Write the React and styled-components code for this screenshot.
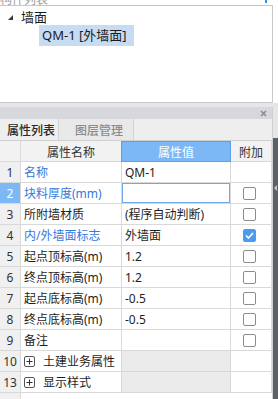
import React from "react";
import styled, { createGlobalStyle } from "styled-components";

const Global = createGlobalStyle`
  html, body { margin: 0; padding: 0; background: #e6e6e6; }
  body { font-family: "Noto Sans", "Noto Sans CJK SC", sans-serif; }
  * { box-sizing: border-box; }
`;

const Root = styled.div`
  width: 278px;
  height: 399px;
  overflow: hidden;
  display: flex;
  flex-direction: column;
  background: #e6e6e6;
`;

const TopArea = styled.div`
  background: #ffffff;
  width: 278px;
`;

const TitleStub = styled.div`
  height: 5px;
  overflow: hidden;
  display: flex;
  justify-content: space-between;
  align-items: flex-end;
  padding-right: 11px;
`;

const StubText = styled.span`
  font-family: "Noto Sans CJK SC", sans-serif;
  font-size: 12px;
  line-height: 12px;
  height: 12px;
  color: #a0a0a0;
  flex: none;
`;

const StubMark = styled.span`
  width: 2px;
  height: 3px;
  background: #3d8fe0;
  align-self: flex-start;
`;

const TreeBox = styled.div`
  width: 273px;
  height: 98px;
  border-top: 1px solid #c8c8c8;
  border-right: 1px solid #c8c8c8;
  border-bottom: 1px solid #c8c8c8;
  background: #ffffff;
  padding-top: 4px;
  display: flex;
  flex-direction: column;
`;

const TreeRow = styled.div`
  display: flex;
  align-items: center;
  height: ${(p) => p.$h}px;
  padding-left: ${(p) => p.$indent}px;
`;

const Caret = styled.svg`
  width: 5px;
  height: 5px;
  margin-right: 8px;
  flex: none;
`;

const TreeLabel = styled.span`
  font-family: "Noto Sans", "Noto Sans CJK SC", sans-serif;
  font-size: 13px;
  color: #1a1a1a;
  padding: ${(p) => (p.$selected ? "0 7px 0 3px" : "0")};
  background: ${(p) => (p.$selected ? "#c7dbf3" : "transparent")};
  height: ${(p) => (p.$selected ? "21px" : "auto")};
  line-height: 21px;
  white-space: nowrap;
`;

const Gap = styled.div`
  height: 4px;
  background: #e6e6e6;
`;

const Lower = styled.div`
  display: flex;
  flex: 1;
  min-height: 0;
`;

const PropPanel = styled.div`
  width: 273px;
  display: flex;
  flex-direction: column;
  background: #eeeeee;
  border-right: 1px solid #cfcfcf;
`;

const TitleBar = styled.div`
  height: 12px;
  background: #d7d8dd;
  display: flex;
  justify-content: flex-end;
  align-items: center;
  padding-right: 5px;
`;

const CloseIcon = styled.svg`
  width: 7px;
  height: 7px;
`;

const TabBar = styled.div`
  height: 22px;
  display: flex;
  background: #eeeeee;
  border-bottom: 1px solid #d0d0d0;
`;

const Tab = styled.div`
  height: 21px;
  display: flex;
  align-items: center;
  font-family: "Noto Sans CJK SC", sans-serif;
  font-size: 12px;
  font-weight: 500;
  color: ${(p) => (p.$active ? "#2a2a2a" : "#8c8c8c")};
  background: ${(p) => (p.$active ? "#eeeeee" : "#e9e9e9")};
  padding: ${(p) => (p.$active ? "0 3px 0 7px" : "0 10px 0 16px")};
  border-right: 1px solid #d3d3d3;
`;

const Side = styled.div`
  flex: 1;
  display: flex;
  flex-direction: column;
`;

const SideDark = styled.div`
  margin-top: 31px;
  flex: 1;
  background: #5c6067;
  position: relative;
`;

const SideNotch = styled.svg`
  position: absolute;
  left: 1px;
  top: 47px;
  width: 3px;
  height: 6px;
`;

const Grid = styled.div`
  flex: 1;
  display: grid;
  grid-template-columns: 21px 101px 109px 41px;
  grid-auto-rows: 21px;
  align-content: start;
  background: linear-gradient(to right, #f0f0f0 0, #f0f0f0 20px, #d9d9d9 20px, #d9d9d9 21px, #ffffff 21px);
`;

const Cell = styled.div`
  border-right: 1px solid #d9d9d9;
  border-bottom: 1px solid #d9d9d9;
  display: flex;
  align-items: center;
  justify-content: ${(p) => (p.$center ? "center" : "flex-start")};
  padding-left: ${(p) => (p.$center ? 0 : 3)}px;
  font-family: "Noto Sans", "Noto Sans CJK SC", sans-serif;
  font-size: 12px;
  color: ${(p) => p.$color || "#1e1e1e"};
  background: ${(p) => p.$bg || "#ffffff"};
  white-space: nowrap;
  overflow: hidden;
`;

const HeadCell = styled(Cell)`
  background: ${(p) => (p.$hl ? "#7cb8f6" : "#f2f2f2")};
  color: ${(p) => (p.$hl ? "#ffffff" : "#333333")};
  border-color: ${(p) => (p.$hl ? "#5c9fe6" : "#d9d9d9")};
  ${(p) => (p.$hl ? "border-left: 1px solid #5c9fe6; border-top: 1px solid #5c9fe6; margin-left: -1px;" : "")}
  font-family: "Noto Sans CJK SC", sans-serif;
`;

const NumCell = styled(Cell)`
  background: ${(p) => (p.$hl ? "#7cb8f6" : "#f0f0f0")};
  color: ${(p) => (p.$hl ? "#ffffff" : "#333333")};
  font-size: 12px;
  justify-content: center;
  padding-left: 0;
`;

const ValueCell = styled(Cell)`
  ${(p) => (p.$focus ? "box-shadow: inset 0 0 0 1px #6ea9e6;" : "")}
`;

const Check = styled.span`
  width: 13px;
  height: 13px;
  border-radius: 2px;
  border: 1px solid ${(p) => (p.$on ? "#4a9cf0" : "#8c8c8c")};
  background: ${(p) => (p.$on ? "#4a9cf0" : "#ffffff")};
  display: flex;
  align-items: center;
  justify-content: center;
  margin-left: -3px;
`;

const PlusBox = styled.span`
  width: 11px;
  height: 11px;
  border: 1px solid #555555;
  border-radius: 2px;
  display: flex;
  align-items: center;
  justify-content: center;
  margin-right: 8px;
  flex: none;
`;

const rows = [
  { n: "1", name: "名称", val: "QM-1", blue: true, check: null },
  { n: "2", name: "块料厚度(mm)", val: "", blue: true, check: false, focus: true },
  { n: "3", name: "所附墙材质", val: "(程序自动判断)", check: false },
  { n: "4", name: "内/外墙面标志", val: "外墙面", blue: true, check: true },
  { n: "5", name: "起点顶标高(m)", val: "1.2", check: false },
  { n: "6", name: "终点顶标高(m)", val: "1.2", check: false },
  { n: "7", name: "起点底标高(m)", val: "-0.5", check: false },
  { n: "8", name: "终点底标高(m)", val: "-0.5", check: false },
  { n: "9", name: "备注", val: "", check: false },
  { n: "10", name: "土建业务属性", group: true },
  { n: "13", name: "显示样式", group: true },
];

function CheckMark() {
  return (
    <svg width="9" height="7" viewBox="0 0 9 7">
      <path d="M1 3.5 L3.5 6 L8 1" fill="none" stroke="#ffffff" strokeWidth="1.6" />
    </svg>
  );
}

function Plus() {
  return (
    <svg width="7" height="7" viewBox="0 0 7 7">
      <path d="M3.5 0.5 V6.5 M0.5 3.5 H6.5" stroke="#333333" strokeWidth="1" />
    </svg>
  );
}

export default function App() {
  return (
    <Root>
      <Global />
      <TopArea>
        <TitleStub>
          <StubText>构件列表</StubText>
          <StubMark />
        </TitleStub>
        <TreeBox>
          <TreeRow $h={15} $indent={8}>
            <Caret viewBox="0 0 5 5">
              <path d="M5 0 L5 5 L0 5 Z" fill="#3a3a3a" />
            </Caret>
            <TreeLabel>墙面</TreeLabel>
          </TreeRow>
          <TreeRow $h={21} $indent={39}>
            <TreeLabel $selected>QM-1 [外墙面]</TreeLabel>
          </TreeRow>
        </TreeBox>
      </TopArea>
      <Gap />
      <Lower>
        <PropPanel>
          <TitleBar>
            <CloseIcon viewBox="0 0 7 7">
              <path d="M1 1 L6 6 M6 1 L1 6" stroke="#8a8a8a" strokeWidth="1.5" />
            </CloseIcon>
          </TitleBar>
          <TabBar>
            <Tab $active>属性列表</Tab>
            <Tab>图层管理</Tab>
          </TabBar>
          <Grid>
            <HeadCell $center />
            <HeadCell $center>属性名称</HeadCell>
            <HeadCell $center $hl>属性值</HeadCell>
            <HeadCell $center>附加</HeadCell>
            {rows.map((r) => (
              <React.Fragment key={r.n}>
                <NumCell $hl={r.focus}>{r.n}</NumCell>
                <Cell $color={r.blue ? "#3479dc" : "#1e1e1e"}>
                  {r.group && (
                    <PlusBox>
                      <Plus />
                    </PlusBox>
                  )}
                  {r.name}
                </Cell>
                <ValueCell $focus={r.focus} $bg={r.group ? "#ebebeb" : "#ffffff"}>
                  {r.val}
                </ValueCell>
                <Cell $center>
                  {r.check !== null && r.check !== undefined && (
                    <Check $on={r.check}>{r.check && <CheckMark />}</Check>
                  )}
                </Cell>
              </React.Fragment>
            ))}
          </Grid>
        </PropPanel>
        <Side>
          <SideDark>
            <SideNotch viewBox="0 0 3 6">
              <path d="M3 0 L0 3 L3 6 Z" fill="#c8c8c8" />
            </SideNotch>
          </SideDark>
        </Side>
      </Lower>
    </Root>
  );
}
